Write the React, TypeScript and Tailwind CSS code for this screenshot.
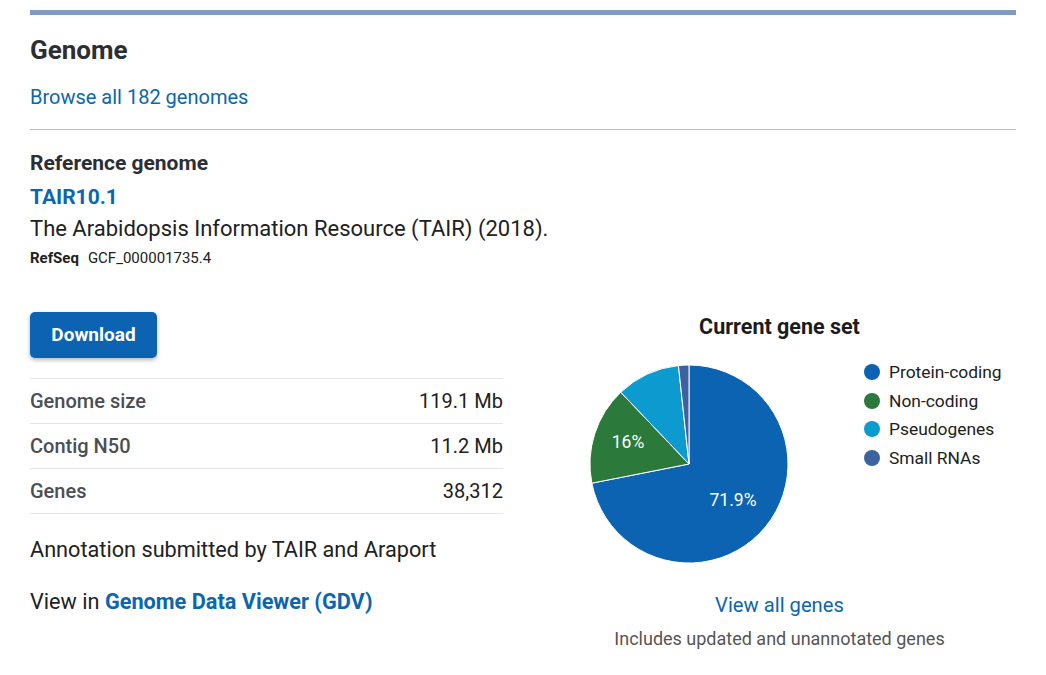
import React from "react";

const slices = [
  { label: "Protein-coding", value: 71.9, color: "#0b63b2" },
  { label: "Non-coding", value: 16, color: "#2b7a3b" },
  { label: "Pseudogenes", value: 10.4, color: "#0d9bcf" },
  { label: "Small RNAs", value: 1.7, color: "#3c63a0" },
];

const stats = [
  { label: "Genome size", value: "119.1 Mb" },
  { label: "Contig N50", value: "11.2 Mb" },
  { label: "Genes", value: "38,312" },
];

function point(cx: number, cy: number, r: number, pct: number) {
  const a = (pct / 100) * Math.PI * 2;
  return [cx + r * Math.sin(a), cy - r * Math.cos(a)];
}

function Pie() {
  const total = slices.reduce((s, x) => s + x.value, 0);
  let acc = 0;
  const cx = 100;
  const cy = 100;
  const r = 99;
  return (
    <svg width="200" height="200" viewBox="0 0 200 200" className="shrink-0">
      {slices.map((s) => {
        const start = (acc / total) * 100;
        acc += s.value;
        const end = (acc / total) * 100;
        const [x1, y1] = point(cx, cy, r, start);
        const [x2, y2] = point(cx, cy, r, end);
        const large = end - start > 50 ? 1 : 0;
        return (
          <path
            key={s.label}
            d={`M${cx} ${cy} L${x1} ${y1} A${r} ${r} 0 ${large} 1 ${x2} ${y2} Z`}
            fill={s.color}
            stroke="#ffffff"
            strokeWidth="1"
            strokeLinejoin="round"
          />
        );
      })}
      <text x="144" y="142" fill="#ffffff" fontSize="17.5" textAnchor="middle" fontFamily="Roboto, sans-serif">
        71.9%
      </text>
      <text x="39" y="84" fill="#ffffff" fontSize="17.5" textAnchor="middle" fontFamily="Roboto, sans-serif">
        16%
      </text>
    </svg>
  );
}

export default function App() {
  return (
    <div className="min-h-[675px] w-full bg-white px-[30px] pt-[10px] font-['Roboto',sans-serif] text-[#212121]">
      <div className="h-[5px] w-full bg-[#7f9bc4]" />

      <h2 className="mt-[19px] text-[26px] font-bold leading-[32px] text-[#2b2e33]">Genome</h2>
      <a href="#" className="mt-[17px] block text-[20px] leading-[28px] text-[#0b66b1]">
        Browse all 182 genomes
      </a>
      <div className="mt-[18px] h-px w-full bg-[#bdbdbd]" />

      <h3 className="mt-[19px] text-[21px] font-bold leading-[28px] text-[#2b2e33]">Reference genome</h3>
      <a href="#" className="mt-[6px] block text-[21px] font-bold leading-[28px] text-[#0b66b1]">
        TAIR10.1
      </a>
      <p className="mt-[3px] text-[22px] leading-[30px] text-[#212121]">The Arabidopsis Information Resource (TAIR) (2018).</p>
      <p className="mt-[4px] text-[15px] leading-[20px] text-[#212121]">
        <span className="font-bold">RefSeq</span>
        <span className="ml-[9px]">GCF_000001735.4</span>
      </p>

      <div className="mt-[44px] grid grid-cols-2 gap-[40px]">
        <div>
          <button className="h-[46px] w-[127px] rounded-[5px] bg-[#0b63b2] text-[19px] font-bold text-white shadow-[0_2px_4px_rgba(0,0,0,0.3)]">
            Download
          </button>
          <div className="mt-[20px] border-t border-[#e6e6e6]">
            {stats.map((s) => (
              <div key={s.label} className="flex h-[45px] items-center justify-between border-b border-[#e6e6e6] text-[20px]">
                <span className="font-medium text-[#4b4e54]">{s.label}</span>
                <span className="text-[#212121]">{s.value}</span>
              </div>
            ))}
          </div>
          <p className="mt-[21px] text-[21.7px] leading-[30px]">Annotation submitted by TAIR and Araport</p>
          <p className="mt-[22px] text-[21.7px] leading-[30px]">
            View in{" "}
            <a href="#" className="font-bold text-[#0b66b1]">
              Genome Data Viewer (GDV)
            </a>
          </p>
        </div>

        <div className="flex flex-col items-center">
          <h4 className="mt-px text-[21.5px] font-bold leading-[28px] text-[#1c1c1c]">Current gene set</h4>
          <div className="mt-[23px] flex w-full items-start pl-[46px]">
            <Pie />
            <ul className="ml-[75px] mt-[-6px] flex flex-col">
              {slices.map((s) => (
                <li key={s.label} className="flex h-[28.6px] items-center text-[17.4px] text-[#212121]">
                  <span className="mr-[9px] h-[16px] w-[16px] shrink-0 rounded-full" style={{ backgroundColor: s.color }} />
                  {s.label}
                </li>
              ))}
            </ul>
          </div>
          <a href="#" className="mt-[27px] text-[20.2px] leading-[28px] text-[#0b66b1]">
            View all genes
          </a>
          <p className="mt-[8px] text-[18px] leading-[24px] text-[#555555]">Includes updated and unannotated genes</p>
        </div>
      </div>
    </div>
  );
}
